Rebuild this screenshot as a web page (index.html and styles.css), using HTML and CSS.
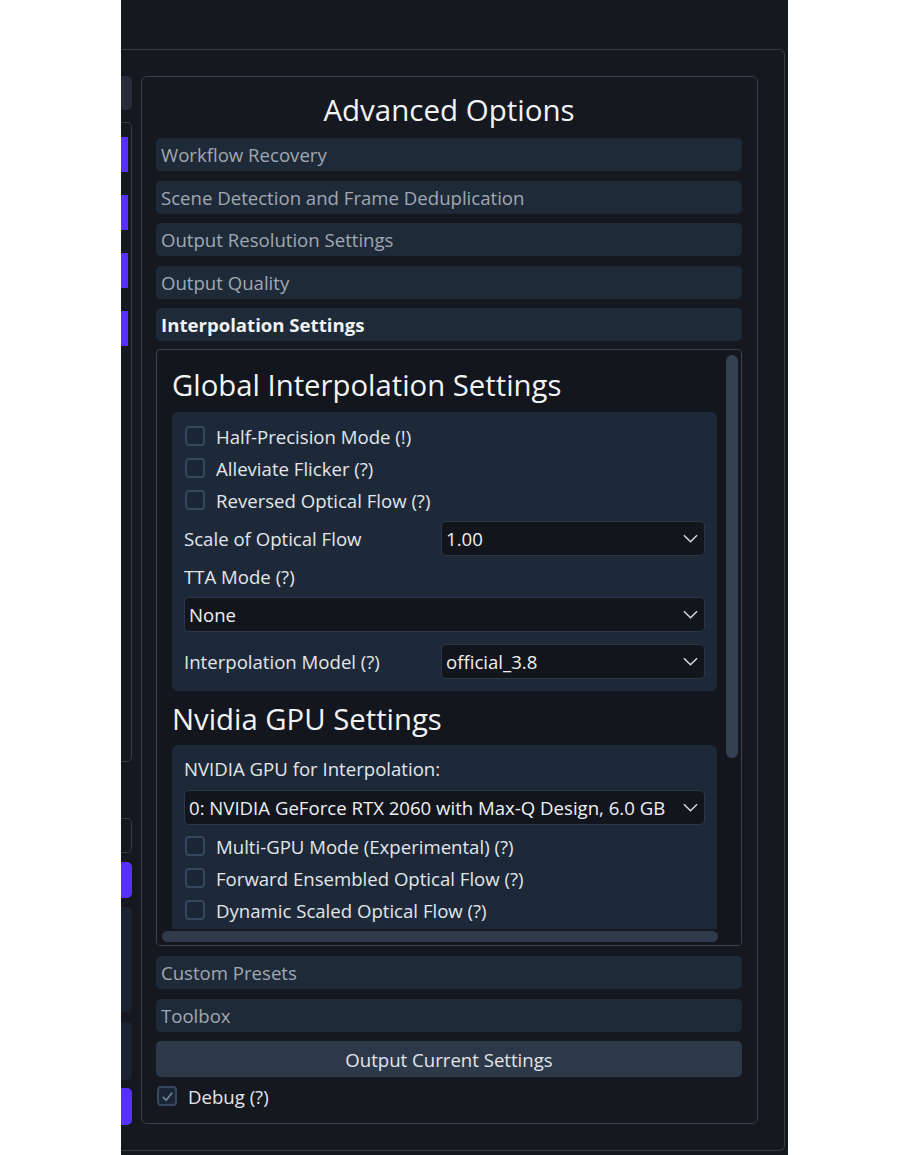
FILE: index.html
```html
<!DOCTYPE html>
<html lang="en">
<head>
    <meta charset="UTF-8">
    <title>Advanced Options</title>
    <link rel="stylesheet" href="styles.css">
</head>
<body>
    <div class="app">
        <div class="frame">
            <div class="side">
                <div class="side-tab"></div>
                <div class="side-box">
                    <div class="side-mark"></div>
                    <div class="side-mark"></div>
                    <div class="side-mark"></div>
                    <div class="side-mark"></div>
                </div>
                <div class="side-field"></div>
                <div class="side-mark solo m1"></div>
                <div class="side-tab tall"></div>
                <div class="side-tab mid"></div>
                <div class="side-mark solo m2"></div>
            </div>

            <div class="panel">
                <h1 class="title">Advanced Options</h1>
                <div class="section">Workflow Recovery</div>
                <div class="section">Scene Detection and Frame Deduplication</div>
                <div class="section">Output Resolution Settings</div>
                <div class="section">Output Quality</div>
                <div class="section open">Interpolation Settings</div>

                <div class="scroll">
                    <div class="viewport">
                        <h2 class="heading">Global Interpolation Settings</h2>
                        <div class="group">
                            <label class="check"><span class="box"></span>Half-Precision Mode (!)</label>
                            <label class="check"><span class="box"></span>Alleviate Flicker (?)</label>
                            <label class="check"><span class="box"></span>Reversed Optical Flow (?)</label>
                            <div class="row first">
                                <span class="label">Scale of Optical Flow</span>
                                <div class="select half">1.00<svg class="chev" viewBox="0 0 16 9"><polyline points="1,1 8,8 15,1"/></svg></div>
                            </div>
                            <div class="label solo">TTA Mode (?)</div>
                            <div class="select tta">None<svg class="chev" viewBox="0 0 16 9"><polyline points="1,1 8,8 15,1"/></svg></div>
                            <div class="row last">
                                <span class="label">Interpolation Model (?)</span>
                                <div class="select half">official_3.8<svg class="chev" viewBox="0 0 16 9"><polyline points="1,1 8,8 15,1"/></svg></div>
                            </div>
                        </div>

                        <h2 class="heading second">Nvidia GPU Settings</h2>
                        <div class="group gpu-group">
                            <div class="label solo top">NVIDIA GPU for Interpolation:</div>
                            <div class="select gpu">0: NVIDIA GeForce RTX 2060 with Max-Q Design, 6.0 GB<svg class="chev" viewBox="0 0 16 9"><polyline points="1,1 8,8 15,1"/></svg></div>
                            <label class="check"><span class="box"></span>Multi-GPU Mode (Experimental) (?)</label>
                            <label class="check"><span class="box"></span>Forward Ensembled Optical Flow (?)</label>
                            <label class="check"><span class="box"></span>Dynamic Scaled Optical Flow (?)</label>
                        </div>
                    </div>
                    <div class="vbar"><div class="thumb-v"></div></div>
                    <div class="hbar"><div class="thumb-h"></div></div>
                </div>

                <div class="section after">Custom Presets</div>
                <div class="section">Toolbox</div>
                <button class="output">Output Current Settings</button>
                <label class="check debug">
                    <span class="box checked"><svg viewBox="0 0 16 16"><polyline points="3,8.5 6.5,12 13,4"/></svg></span>Debug (?)
                </label>
            </div>
        </div>
    </div>
</body>
</html>
```
FILE: styles.css
```css
body {
    margin: 0;
    background: #fff;
    font-family: "Open Sans", "Noto Sans", sans-serif;
}

.app {
    margin-left: 121px;
    width: 667px;
    height: 1155px;
    background: #15181f;
    padding-top: 49px;
    box-sizing: border-box;
    overflow: hidden;
}

.frame {
    width: 664px;
    height: 1102px;
    box-sizing: border-box;
    border: 1px solid #363b46;
    border-left: none;
    border-radius: 0 6px 6px 0;
    padding-top: 26px;
    display: flex;
    gap: 9px;
}

/* cut off column on the left */
.side {
    width: 11px;
    display: flex;
    flex-direction: column;
}

.side-tab {
    height: 34px;
    background: #262d39;
    border-radius: 0 5px 5px 0;
}

.side-tab.tall {
    height: 105px;
    margin-top: 9px;
    background: #1c2330;
}

.side-tab.mid {
    height: 58px;
    margin-top: 10px;
    background: #1c2330;
}

.side-box {
    margin-top: 12px;
    height: 640px;
    box-sizing: border-box;
    border: 1px solid #363c48;
    border-left: none;
    border-radius: 0 5px 5px 0;
    padding-top: 14px;
    display: flex;
    flex-direction: column;
    gap: 23px;
}

.side-mark {
    width: 7px;
    height: 35px;
    background: #5530ff;
}

.side-mark.solo {
    width: 11px;
    border-radius: 0 5px 5px 0;
    height: 36px;
}

.side-mark.m1 { margin-top: 9px; }
.side-mark.m2 { margin-top: 8px; height: 37px; }

.side-field {
    margin-top: 56px;
    height: 35px;
    box-sizing: border-box;
    border: 1px solid #363c48;
    border-left: none;
    border-radius: 0 5px 5px 0;
}

.panel {
    width: 617px;
    height: 1048px;
    box-sizing: border-box;
    border: 1px solid #3a3f4b;
    border-radius: 6px;
    padding: 0 15px 0 14px;
    display: flex;
    flex-direction: column;
}

.title {
    margin: 0;
    padding-top: 14px;
    height: 61px;
    box-sizing: border-box;
    line-height: 38px;
    font-size: 29.5px;
    font-weight: 400;
    text-align: center;
    color: #f2f3f5;
}

.section {
    height: 33px;
    line-height: 33px;
    margin-bottom: 9.5px;
    padding-left: 5px;
    background: #1f2a39;
    border-radius: 5px;
    font-size: 18.6px;
    color: #a0a8b2;
    white-space: nowrap;
}

.section.open {
    margin-bottom: 8px;
    font-weight: 700;
    color: #f0f2f4;
}

.section.after {
    margin-top: 10px;
}

.scroll {
    height: 597px;
    box-sizing: border-box;
    border: 1px solid #3b4350;
    border-radius: 4px;
    background: #13161d;
    display: grid;
    grid-template-columns: 1fr 17px;
    grid-template-rows: 1fr 16px;
    overflow: hidden;
}

.viewport {
    overflow: hidden;
    padding: 16px 7px 0 15px;
}

.heading {
    margin: 0;
    height: 38px;
    line-height: 38px;
    font-size: 29.3px;
    font-weight: 400;
    color: #f2f3f5;
    white-space: nowrap;
}

.heading.second {
    margin-top: 5px;
    padding-top: 4px;
    height: 37px;
}

.group {
    margin-top: 8px;
    background: #1d2938;
    border-radius: 6px;
    padding: 8px 12px 12px 12px;
    color: #e3e6ea;
    font-size: 18.6px;
}

.group.gpu-group {
    padding-bottom: 20px;
}

.check {
    height: 32px;
    display: flex;
    align-items: center;
    gap: 11px;
    padding-left: 1px;
    white-space: nowrap;
}

.box {
    width: 20px;
    height: 20px;
    box-sizing: border-box;
    border: 2px solid #34475f;
    border-radius: 4px;
    background: #1a2535;
    flex-shrink: 0;
}

.row {
    display: flex;
    align-items: center;
    justify-content: space-between;
}

.row.first { margin-top: 5px; }
.row.last { margin-top: 12px; }

.label {
    white-space: nowrap;
}

.label.solo {
    height: 34px;
    line-height: 34px;
    margin-top: 4px;
}

.label.top {
    margin-top: 4px;
    height: 24px;
    line-height: 24px;
    margin-bottom: 9px;
}

.select {
    height: 35px;
    box-sizing: border-box;
    border: 1px solid #2c3747;
    border-radius: 5px;
    background: #12151c;
    padding: 0 6px 0 4px;
    display: flex;
    align-items: center;
    justify-content: space-between;
    color: #eef0f3;
    white-space: nowrap;
}

.select.half {
    width: 264px;
}

.select.tta {
    margin-top: 3px;
}

.select.gpu {
    margin-bottom: 5px;
}

.chev {
    width: 15px;
    height: 9px;
    flex-shrink: 0;
    fill: none;
    stroke: #d6dae0;
    stroke-width: 1.6;
}

.vbar {
    padding: 5px 3px 0 2px;
}

.thumb-v {
    height: 403px;
    background: #354152;
    border-radius: 6px;
}

.hbar {
    grid-column: 1 / span 2;
    padding: 2px 21px 0 5px;
    background: #13161d;
}

.thumb-h {
    height: 11px;
    width: 556px;
    background: #2f3b4b;
    border-radius: 6px;
}

.output {
    height: 36px;
    border: none;
    border-radius: 5px;
    background: #2d3949;
    font-family: inherit;
    font-size: 18.6px;
    color: #e2e5e9;
}

.check.debug {
    margin-top: 3px;
    height: 32px;
    font-size: 18.6px;
    color: #e3e6ea;
}

.box.checked {
    display: flex;
    align-items: center;
    justify-content: center;
}

.box.checked svg {
    width: 15px;
    height: 15px;
    fill: none;
    stroke: #7386a0;
    stroke-width: 1.8;
}
```
